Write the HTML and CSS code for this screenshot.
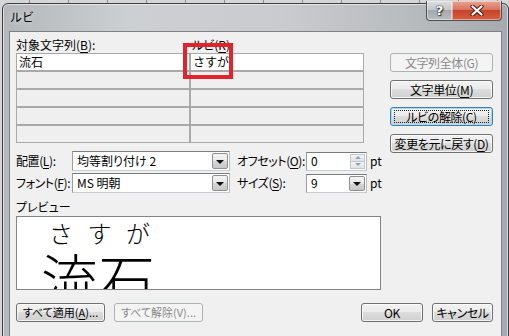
FILE: index.html
```html
<!DOCTYPE html>
<html lang="ja">
<head>
    <meta charset="UTF-8">
    <meta name="viewport" content="width=device-width, initial-scale=1.0">
    <title>ルビ</title>
    <link rel="stylesheet" href="styles.css">
</head>
<body>
    <div class="window">
        <div class="titlebar">
            <span class="title">ルビ</span>
        </div>

        <!-- botones de la barra de título -->
        <div class="cap cap-help">?</div>
        <div class="cap cap-close">
            <svg width="14" height="11" viewBox="0 0 14 11">
                <path d="M2.5 1.5 L11.5 9.5 M11.5 1.5 L2.5 9.5" stroke="#5a1d12" stroke-width="4.2" stroke-linecap="round"/>
                <path d="M2.5 1.5 L11.5 9.5 M11.5 1.5 L2.5 9.5" stroke="#fff" stroke-width="2.2" stroke-linecap="round"/>
            </svg>
        </div>

        <div class="client">
            <div class="main">
                <div class="left">
                    <div class="heads">
                        <span class="head-base">対象文字列(<u>B</u>):</span>
                        <span class="head-ruby">ルビ(<u>R</u>):</span>
                    </div>

                    <div class="ruby-grid">
                        <div class="cell first">流石</div>
                        <div class="cell first">さすが</div>
                        <div class="cell"></div>
                        <div class="cell"></div>
                        <div class="cell"></div>
                        <div class="cell"></div>
                        <div class="cell"></div>
                        <div class="cell"></div>
                        <div class="cell"></div>
                        <div class="cell"></div>
                    </div>

                    <div class="mark"></div>

                    <div class="opts">
                        <div class="opt-row">
                            <span class="lbl">配置(<u>L</u>):</span>
                            <div class="combo wide">
                                <span class="combo-text">均等割り付け 2</span>
                                <span class="drop"></span>
                            </div>
                            <span class="lbl lbl2">オフセット(<u>O</u>):</span>
                            <div class="combo small spin">
                                <span class="combo-text">0</span>
                                <span class="spin-btns">
                                    <span class="spin-up"></span>
                                    <span class="spin-down"></span>
                                </span>
                            </div>
                            <span class="unit">pt</span>
                        </div>
                        <div class="opt-row">
                            <span class="lbl">フォント(<u>F</u>):</span>
                            <div class="combo wide">
                                <span class="combo-text">MS 明朝</span>
                                <span class="drop"></span>
                            </div>
                            <span class="lbl lbl2">サイズ(<u>S</u>):</span>
                            <div class="combo small">
                                <span class="combo-text">9</span>
                                <span class="drop"></span>
                            </div>
                            <span class="unit">pt</span>
                        </div>
                    </div>

                    <div class="preview-label">プレビュー</div>
                    <div class="preview">
                        <div class="pv-ruby">さすが</div>
                        <div class="pv-base">流石</div>
                    </div>
                </div>

                <div class="side">
                    <div class="btn disabled">文字列全体(G)</div>
                    <div class="btn">文字単位(<u>M</u>)</div>
                    <div class="btn focus">ルビの解除(C)</div>
                    <div class="btn">変更を元に戻す(<u>D</u>)</div>
                </div>
            </div>

            <div class="footer">
                <div class="btn btn-all">すべて適用(<u>A</u>)...</div>
                <div class="btn btn-all disabled">すべて解除(V)...</div>
                <div class="spacer"></div>
                <div class="btn btn-ok">OK</div>
                <div class="btn btn-cancel">キャンセル</div>
            </div>
        </div>
    </div>
</body>
</html>
```

FILE: styles.css
```css
html, body {
    margin: 0;
    padding: 0;
    overflow: hidden;
}

body {
    width: 509px;
    height: 336px;
    font-family: "Noto Sans CJK JP", sans-serif;
    font-size: 12px;
    color: #000;
    background: repeating-linear-gradient(to right, #d6d6d6 0, #d6d6d6 38px, #8c8c8c 38px, #8c8c8c 39px);
    background-position: -9px 0;
}

u {
    text-decoration-thickness: 1px;
    text-underline-offset: 2px;
}

/* Marco de la ventana (Aero) */
.window {
    position: relative;
    width: 493px;
    margin: 3px 0 0 2px;
    padding: 0 6px 5px 6px;
    border: 1px solid #3c4044;
    border-radius: 6px 6px 5px 5px;
    background: linear-gradient(to right, #b4b7ba 0%, #cdd0d2 25%, #c9cbce 55%, #b9bcbf 80%, #a6aaae 100%);
    box-shadow: inset 0 0 0 1px rgba(255, 255, 255, 0.55);
}

.titlebar {
    height: 27px;
    display: flex;
    align-items: center;
    padding-left: 1px;
}

.title {
    font-size: 12px;
    line-height: 16px;
    margin-top: -2px;
    text-shadow: 0 0 6px rgba(255, 255, 255, 0.9);
}

.cap {
    position: absolute;
    top: -3px;
    height: 20px;
    box-sizing: border-box;
    border: 1px solid #4c5156;
    border-top: none;
    display: flex;
    align-items: center;
    justify-content: center;
    box-shadow: inset 0 0 0 1px rgba(255, 255, 255, 0.45);
}

.cap-help {
    left: 423px;
    width: 27px;
    border-radius: 0 0 0 4px;
    background: linear-gradient(#dcdee0 0%, #c4c7ca 45%, #a5a9ad 50%, #b9bdc1 100%);
    color: #fff;
    font-family: "DejaVu Sans", sans-serif;
    font-weight: bold;
    font-size: 13px;
    text-shadow: 0 0 1px #333, 0 0 2px #333, 1px 1px 1px #333;
}

.cap-close {
    left: 449px;
    width: 50px;
    border-left: none;
    border-radius: 0 0 4px 0;
    background: linear-gradient(#e8a493 0%, #d9745f 45%, #c7442a 50%, #d65e3f 100%);
}

/* Área de cliente */
.client {
    height: 297px;
    border: 1px solid #7d8185;
    background: #f0f0f0;
    padding: 5px 8px 7px 6px;
    box-sizing: content-box;
}

.main {
    display: flex;
    gap: 8px;
    height: 253px;
}

.left {
    position: relative;
    width: 366px;
    flex-shrink: 0;
}

.heads {
    display: flex;
    height: 16px;
    line-height: 16px;
    font-feature-settings: "palt";
    white-space: nowrap;
}

.head-base {
    width: 176px;
}

.ruby-grid {
    display: grid;
    grid-template-columns: 174px 174px;
}

.cell {
    height: 18px;
    box-sizing: border-box;
    border: 1px solid #a9a9a9;
    background: #efefef;
    padding-left: 2px;
    line-height: 16px;
}

.cell.first {
    background: #fff;
}

.mark {
    position: absolute;
    left: 167px;
    top: 6px;
    width: 50px;
    height: 36px;
    box-sizing: border-box;
    border: 4px solid #e4222b;
}

.opts {
    margin-top: 8px;
    display: flex;
    flex-direction: column;
    gap: 2px;
}

.opt-row {
    display: flex;
    align-items: center;
    height: 20px;
    font-feature-settings: "palt";
    white-space: nowrap;
}

.opt-row > * {
    flex-shrink: 0;
}

.lbl {
    width: 56px;
    line-height: 16px;
    letter-spacing: -0.4px;
}

.lbl2 {
    width: 69px;
    margin-left: 7px;
}

.combo {
    position: relative;
    box-sizing: border-box;
    display: flex;
    align-items: center;
    background: #fff;
    border: 1px solid #abadb3;
    border-color: #7a7c80 #b9bcc1 #c8ccd0 #9a9da2;
}

.combo.wide {
    width: 158px;
    height: 20px;
}

.combo.small {
    width: 61px;
    height: 19px;
}

.combo-text {
    flex: 1;
    padding-left: 4px;
    line-height: 16px;
}

.drop {
    width: 16px;
    align-self: stretch;
    margin: 1px;
    box-sizing: border-box;
    border: 1px solid #8e8f8f;
    border-radius: 2px;
    background: linear-gradient(#f4f4f4 0%, #e7e7e7 50%, #d6d6d6 51%, #c8c8c8 100%);
    display: flex;
    align-items: center;
    justify-content: center;
}

.drop::after {
    content: "";
    border-left: 4px solid transparent;
    border-right: 4px solid transparent;
    border-top: 4px solid #111;
    margin-top: 1px;
}

.spin-btns {
    width: 15px;
    align-self: stretch;
    margin: 1px;
    display: flex;
    flex-direction: column;
}

.spin-up,
.spin-down {
    flex: 1;
    display: flex;
    align-items: center;
    justify-content: center;
    background: linear-gradient(#f2f4f6, #dfe3e8);
    border: 1px solid #c2c8ce;
}

.spin-down {
    border-top: none;
}

.spin-up::after {
    content: "";
    border-left: 3px solid transparent;
    border-right: 3px solid transparent;
    border-bottom: 3px solid #8ea2b6;
}

.spin-down::after {
    content: "";
    border-left: 3px solid transparent;
    border-right: 3px solid transparent;
    border-top: 3px solid #8ea2b6;
}

.unit {
    margin-left: 3px;
    line-height: 16px;
}

.preview-label {
    margin-top: 6px;
    height: 16px;
    line-height: 16px;
    font-feature-settings: "palt";
}

.preview {
    margin-top: 1px;
    width: 365px;
    height: 74px;
    box-sizing: border-box;
    border: 1px solid #848484;
    background: #fff;
    overflow: hidden;
}

.pv-ruby {
    margin-top: 4px;
    padding-left: 32px;
    font-size: 24px;
    line-height: 24px;
    font-weight: 300;
    letter-spacing: 14.5px;
}

.pv-base {
    margin-top: 4px;
    padding-left: 24px;
    font-size: 57px;
    line-height: 57px;
    font-weight: 300;
}

/* Botones */
.side {
    margin-top: 16px;
    width: 103px;
    display: flex;
    flex-direction: column;
    gap: 8px;
}

.btn {
    position: relative;
    height: 19px;
    box-sizing: border-box;
    border: 1px solid #707070;
    border-radius: 3px;
    background: linear-gradient(#f2f2f2 0%, #ebebeb 49%, #dddddd 50%, #cfcfcf 100%);
    box-shadow: inset 0 0 0 1px rgba(255, 255, 255, 0.75);
    text-align: center;
    line-height: 17px;
    font-feature-settings: "palt";
    letter-spacing: -0.4px;
    white-space: nowrap;
    flex-shrink: 0;
}

.btn.disabled {
    border-color: #adb2b5;
    background: #f4f4f4;
    box-shadow: none;
    color: #8a8a8a;
}

.btn.focus {
    border-color: #3c7fb1;
    box-shadow: inset 0 0 0 1px #a6dcf4;
}

.btn.focus::after {
    content: "";
    position: absolute;
    left: 3px;
    right: 3px;
    top: 2px;
    bottom: 2px;
    border: 1px dotted #222;
}

.footer {
    margin-top: 13px;
    display: flex;
    gap: 9px;
    height: 19px;
}

.btn-all {
    width: 89px;
    font-size: 11px;
    letter-spacing: 0;
}

.spacer {
    flex: 1;
}

.btn-ok {
    width: 62px;
}

.btn-cancel {
    width: 61px;
}
```
